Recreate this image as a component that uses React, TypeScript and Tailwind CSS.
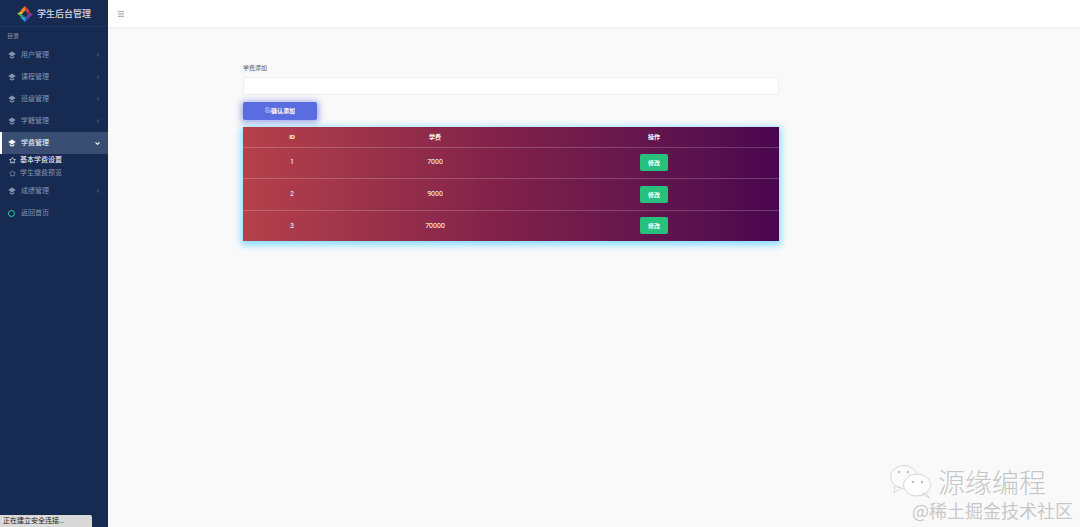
import { ChevronDown, ChevronLeft, Menu, Star, Save } from "lucide-react";

const FONT = "font-['Roboto','Noto_Sans_CJK_SC',sans-serif]";

const FEES = [
  { id: 1, fee: 7000, rowHeight: "h-[31px]" },
  { id: 2, fee: 9000, rowHeight: "h-[32px]" },
  { id: 3, fee: 70000, rowHeight: "h-[31px]" },
];

function Logo() {
  return (
    <svg width="16" height="16" viewBox="0 0 16 16" className="shrink-0">
      <polygon points="8,0 8,5 3,6 4,4" fill="#ee8a2a" />
      <polygon points="8,0 12,4 13,7 8,5" fill="#d8382e" />
      <polygon points="16,8 13,7 8,5 11,8" fill="#b5344a" />
      <polygon points="16,8 11,8 8,11 12,12" fill="#6d3aa0" />
      <polygon points="8,16 12,12 8,11 6,11" fill="#2f5cc4" />
      <polygon points="8,16 4,12 3,10 8,11" fill="#2ba3c9" />
      <polygon points="0,8 3,10 8,11 5,8" fill="#3fa84a" />
      <polygon points="0,8 5,8 8,5 3,6" fill="#e9c02e" />
      <polygon points="8,5 11,8 8,11 5,8" fill="#172a52" />
    </svg>
  );
}

function CapIcon() {
  return (
    <svg viewBox="0 0 16 16" className="h-[8px] w-[8px] shrink-0" fill="currentColor">
      <polygon points="8,1 15.5,6 8,11 0.5,6" />
      <path d="M3.5 10 L8 13 L12.5 10 V13 Q8 16.5 3.5 13 Z" />
    </svg>
  );
}

function NavItem({ label, open }: { label: string; open?: boolean }) {
  return (
    <div
      className={`flex h-[22px] items-center pr-[7px] ${
        open
          ? "border-l-2 border-white bg-[#3a4d73] pl-[6px] text-white"
          : "pl-[8px] text-[#8593ad]"
      }`}
    >
      <CapIcon />
      <span className="ml-[5px] flex-1 text-[7px] leading-none">{label}</span>
      {open ? (
        <ChevronDown className="h-[7px] w-[7px]" strokeWidth={3.5} />
      ) : (
        <ChevronLeft className="h-[6px] w-[6px]" strokeWidth={2} />
      )}
    </div>
  );
}

function SubItem({ label, active }: { label: string; active?: boolean }) {
  return (
    <div
      className={`flex h-[13px] items-center pl-[9px] ${
        active ? "text-white" : "text-[#8593ad]"
      }`}
    >
      <Star className="h-[7px] w-[7px] shrink-0" strokeWidth={2.5} />
      <span className="ml-[4px] text-[7px] leading-none">{label}</span>
    </div>
  );
}

function Sidebar() {
  return (
    <aside className="flex w-[108px] shrink-0 flex-col bg-[#172a52]">
      <div className="flex h-[27px] items-center border-b border-[#24375e] pl-[17px] pt-[1px]">
        <Logo />
        <span className="ml-[4px] mt-[1px] whitespace-nowrap text-[9px] font-medium leading-none text-[#d5dbe6]">
          学生后台管理
        </span>
      </div>
      <div className="flex h-[16px] items-center pl-[7px] text-[6px] text-[#8593ad]">目录</div>
      <div className="mt-[1px]">
        <NavItem label="用户管理" />
        <NavItem label="课程管理" />
        <NavItem label="班级管理" />
        <NavItem label="学籍管理" />
        <NavItem label="学费管理" open />
      </div>
      <div>
        <SubItem label="基本学费设置" active />
        <SubItem label="学生缴费预览" />
      </div>
      <div>
        <NavItem label="成绩管理" />
        <div className="flex h-[22px] items-center pl-[8px] text-[#8593ad]">
          <span className="h-[7px] w-[7px] shrink-0 rounded-full border border-[#2dd4a8]" />
          <span className="ml-[6px] text-[7px] leading-none">返回首页</span>
        </div>
      </div>
    </aside>
  );
}

function FeeTable() {
  return (
    <table className="w-full table-fixed border-collapse bg-gradient-to-r from-[#b5414a] via-[#7f2049] to-[#4a064f] text-white shadow-[0_2px_7px_2px_#86dcff]">
      <thead>
        <tr className="h-[20px] border-b border-white/20 text-[6px]">
          <th className="w-[98px] font-bold">ID</th>
          <th className="w-[188px] font-bold">学费</th>
          <th className="font-bold">操作</th>
        </tr>
      </thead>
      <tbody>
        {FEES.map((row, i) => (
          <tr key={row.id} className={`${row.rowHeight} text-[7px] ${i < 2 ? "border-b border-white/20" : ""}`}>
            <td className="text-center">{row.id}</td>
            <td className="text-center">{row.fee}</td>
            <td className="text-center">
              <button className="h-[17px] w-[28px] rounded-[2px] bg-[#27c07d] text-[6px] font-bold text-white">
                修改
              </button>
            </td>
          </tr>
        ))}
      </tbody>
    </table>
  );
}

function Watermark() {
  return (
    <div className="pointer-events-none absolute bottom-[8px] right-[7px] flex flex-col items-end">
      <div className="flex items-center">
        <svg width="44" height="36" viewBox="0 0 44 36">
          <ellipse cx="15" cy="14" rx="13.5" ry="11.5" fill="#fbfbfb" stroke="#d8d8d8" />
          <polygon points="6,23 5,30 12,25" fill="#fbfbfb" stroke="#d8d8d8" />
          <ellipse cx="28" cy="22" rx="13.5" ry="11" fill="#ffffff" stroke="#d4d4d4" />
          <polygon points="36,30 41,35 33,31" fill="#ffffff" stroke="#d4d4d4" />
          <circle cx="10" cy="9" r="1.2" fill="#bdbdbd" />
          <circle cx="19" cy="9" r="1.2" fill="#bdbdbd" />
          <circle cx="24" cy="19" r="1.2" fill="#bdbdbd" />
          <circle cx="33" cy="19" r="1.2" fill="#bdbdbd" />
        </svg>
        <span className="ml-[5px] mr-[27px] font-['Noto_Sans_CJK_SC',sans-serif] text-[27px] font-light leading-none text-[#c6c6c6] [text-shadow:1px_1px_0_#ffffff]">
          源缘编程
        </span>
      </div>
      <span className="mt-[2px] whitespace-nowrap font-['Noto_Sans_CJK_SC',sans-serif] text-[18px] leading-none text-[#c8c8c8]">
        @稀土掘金技术社区
      </span>
    </div>
  );
}

export default function App() {
  return (
    <div className={`relative flex h-screen w-full overflow-hidden bg-[#f9f9f9] ${FONT}`}>
      <Sidebar />
      <div className="flex min-w-0 flex-1 flex-col">
        <header className="flex h-[27px] items-center bg-white pl-[9px] shadow-[0_1px_2px_rgba(0,0,0,0.04)]">
          <Menu className="h-[8px] w-[8px] text-[#777]" strokeWidth={2} />
        </header>
        <main className="w-[671px] pl-[135px] pt-[37px]">
          <label className="block text-[6px] leading-[8px] text-[#555]">学费添加</label>
          <div className="mt-[5px] h-[18px] rounded-[2px] border border-[#eeeeee] bg-white" />
          <button className="mt-[7px] flex h-[18px] w-[74px] items-center justify-center rounded-[2px] bg-[#5a6de0] pb-[2px] text-[6px] font-bold text-white shadow-[0_1px_6px_2px_rgba(90,109,224,0.55)]">
            <Save className="h-[6px] w-[6px]" strokeWidth={1.5} />
            确认添加
          </button>
          <div className="mt-[7px]">
            <FeeTable />
          </div>
        </main>
      </div>
      <div className="absolute bottom-0 left-0 flex h-[12px] w-[92px] items-center rounded-tr-[2px] bg-[#d9d9d9] pl-[3px] text-[7px] text-[#222]">
        正在建立安全连接...
      </div>
      <Watermark />
    </div>
  );
}
